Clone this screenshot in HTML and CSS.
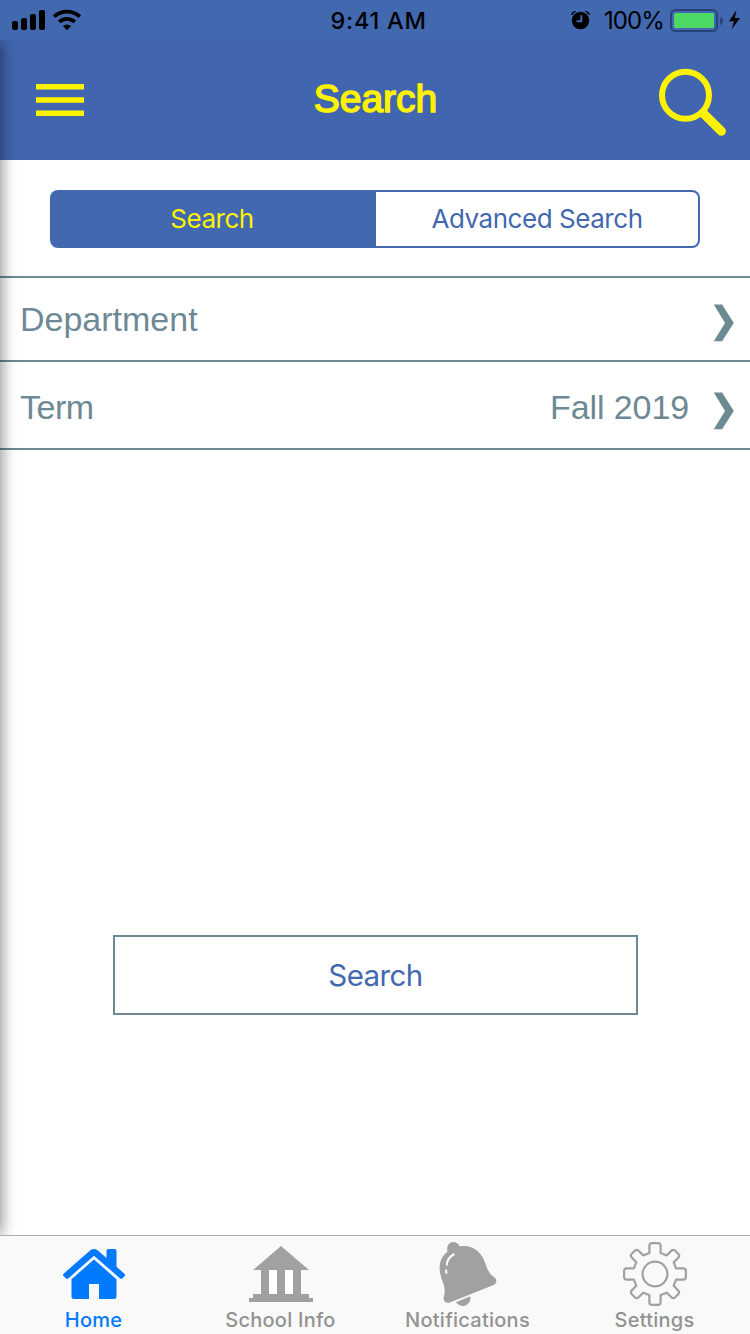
FILE: index.html
```html
<!DOCTYPE html>
<html lang="en">
<head>
<meta charset="utf-8">
<title>Search</title>
<link rel="stylesheet" href="styles.css">
</head>
<body>
<div class="app">
  <div class="status">
    <div class="status-side">
      <svg class="signal" width="70" height="22" viewBox="0 0 70 22">
        <rect x="0" y="12" width="6" height="9" rx="2"/>
        <rect x="9" y="9" width="6" height="12" rx="2"/>
        <rect x="18" y="5" width="6" height="16" rx="2"/>
        <rect x="27" y="1" width="6" height="20" rx="2"/>
        <g fill="none" stroke="#000" stroke-width="3.8">
          <path d="M42.2 7.6a18.8 18.8 0 0 1 25.6 0"/>
          <path d="M47.2 12.9a11.4 11.4 0 0 1 15.6 0"/>
        </g>
        <path d="M50.9 17.1a6.2 6.2 0 0 1 8.2 0L55 21.2z"/>
      </svg>
    </div>
    <div class="status-time">9:41 AM</div>
    <div class="status-side status-right">
      <svg class="alarm" width="20" height="20" viewBox="0 0 20 20">
        <circle cx="9.5" cy="10.5" r="8.7"/>
        <path d="M0 4.6Q1 1.2 5 1L5.2 1.6Q2.6 2.8 1 5zM19 4.6Q18 1.2 14 1l-.2.6Q16.4 2.8 18 5z"/>
        <path class="alarm-hands" d="M10.3 5.2v6H5.5"/>
      </svg>
      <span class="percent">100%</span>
      <svg class="battery" width="71" height="24" viewBox="0 0 71 24">
        <rect x="1" y="1" width="46" height="21" rx="4.5" fill="none" stroke="#28427a" stroke-width="2"/>
        <rect x="4" y="4" width="40" height="15" rx="1.5" fill="#4cd964"/>
        <path d="M50 8q3 1 3 4t-3 4z" fill="#28427a"/>
        <path d="M66.5 1L59 12.2h5L61.7 20.2 70 9h-5.2z"/>
      </svg>
    </div>
  </div>

  <div class="content">
    <header class="navbar">
      <svg class="nav-menu" width="48" height="32" viewBox="0 0 48 32">
        <path d="M0 0h48v5.5H0zM0 13.3h48v5.4H0zM0 26.5h48V32H0z"/>
      </svg>
      <h1 class="nav-title">Search</h1>
      <svg class="nav-search" width="68" height="68" viewBox="0 0 68 68">
        <circle cx="27.5" cy="27.3" r="23.5" stroke-width="6"/>
        <path d="M45 45L63.4 63.3" stroke-width="9" stroke-linecap="round"/>
      </svg>
    </header>

    <div class="segments">
      <div class="segment segment-active">Search</div>
      <div class="segment segment-outline">Advanced Search</div>
    </div>

    <div class="rows">
      <div class="row row-first">
        <span class="row-label">Department</span>
        <svg class="chevron" width="22" height="38" viewBox="0 0 22 38"><path d="M.8.5h8.3L20.8 19 9.1 37.2H.8L12 19z"/></svg>
      </div>
      <div class="row row-term">
        <span class="row-label">Term</span>
        <span class="row-value">Fall 2019</span>
        <svg class="chevron" width="22" height="38" viewBox="0 0 22 38"><path d="M.8.5h8.3L20.8 19 9.1 37.2H.8L12 19z"/></svg>
      </div>
    </div>

    <div class="submit">Search</div>
    <div class="edge-shadow"></div>
  </div>

  <nav class="tabs">
    <div class="tab tab-active">
      <svg width="64" height="64" viewBox="0 0 64 64">
        <path d="M1.7 34.2Q.4 32.8 1.9 31.4L28.4 8.2Q32 5.6 35.6 8.2L44.5 16V9.1Q44.5 7 46.6 7h6Q54.5 7 54.5 9.1V24.8L62.4 31.7Q63.8 33 62.6 34.3L60.8 36Q59.3 37.6 57.8 36.2L32 13.8 6.5 36.2Q5 37.6 3.6 36.1z"/>
        <path d="M32 17.6L54.5 37.2V54.5Q54.5 57 52 57H37V42H27V57H12Q9.5 57 9.5 54.5V37.2z"/>
      </svg>
      <span class="tab-label">Home</span>
    </div>
    <div class="tab">
      <svg width="64" height="64" viewBox="0 0 64 64" class="school">
        <path d="M32 4L60 28H52V52H60V56H64V60H0V56H4V52H12V28H4z"/>
        <path d="M20 28h8v24h-8zM36 28h8v24h-8z" fill="#fff"/>
      </svg>
      <span class="tab-label">School Info</span>
    </div>
    <div class="tab">
      <svg class="bell" width="64" height="64" viewBox="0 0 64 64">
        <path d="M12.4 9.8C11.3 3.8 14.2.1 18.3 0 21.4 0 23.6 1.8 24.6 4.3 36 2.4 45 8.3 49.2 18.5C52.5 27.2 53.3 31.2 59.5 35.5 62.2 37.3 62 41.6 58.5 43.1L15.5 60.2C11.4 61.8 8 59.6 8.7 55.4C10.9 48.7 9.3 43.8 6.5 36.4C3 26 4 16.4 12.4 9.8z"/>
        <path d="M20.8 60.2L34.9 54.4C36.4 58 33.7 62.7 29.7 63.7 26.1 64.7 23 62.6 20.8 60.2z"/>
        <path d="M19.5 12Q12 15.5 11.7 23.5M11 27.6L11.5 31.6" fill="none" stroke="#fff" stroke-width="2"/>
      </svg>
      <span class="tab-label">Notifications</span>
    </div>
    <div class="tab">
      <svg width="64" height="64" viewBox="0 0 64 64">
        <g fill="none" stroke="#a1a1a1" stroke-width="2.2" stroke-linejoin="round">
          <circle cx="32" cy="32" r="12.4"/>
          <path d="M26.4 11V3.8Q26.4 1.1 29 1.1H35Q37.6 1.1 37.6 3.8V11L43.7 13.4 48.4 8.8Q50.3 6.9 52.2 8.8L55.4 12Q57.1 13.8 55.4 15.6L50.7 20.3 53.1 26.4H60.2Q62.9 26.4 62.9 29V35Q62.9 37.6 60.2 37.6H53.1L50.7 43.7 55.2 48.4Q57.1 50.3 55.2 52.2L52.2 55.3Q50.3 57.1 48.4 55.2L43.7 50.7 37.6 53.1V60.2Q37.6 62.9 35 62.9H29Q26.4 62.9 26.4 60.2V53.1L20.3 50.7 15.6 55.2Q13.7 57.1 11.8 55.2L8.8 52.2Q6.9 50.3 8.8 48.4L13.3 43.7 10.9 37.6H3.8Q1.1 37.6 1.1 35V29Q1.1 26.4 3.8 26.4H10.9L13.3 20.3 8.8 15.6Q6.9 13.7 8.8 11.8L11.8 8.8Q13.7 6.9 15.6 8.8L20.3 13.4z"/>
        </g>
      </svg>
      <span class="tab-label">Settings</span>
    </div>
  </nav>
</div>
</body>
</html>
```

FILE: styles.css
```css
* { box-sizing: border-box; }

body {
  margin: 0;
  background: #fff;
  font-family: Inter, "Noto Sans", sans-serif;
}

.app {
  display: flex;
  flex-direction: column;
  width: 750px;
  height: 1334px;
  overflow: hidden;
}

svg { display: block; flex: none; }

.status {
  display: flex;
  height: 40px;
  background: #4268b0;
  color: #000;
  font-size: 24px;
  line-height: 42px;
  white-space: nowrap;
}

.status-side {
  display: flex;
  flex: 1;
  align-items: flex-start;
  padding: 9px 0 0 12px;
}

.status-time {
  width: 100px;
  padding-left: 4px;
  font-weight: 500;
  font-size: 23.5px;
  letter-spacing: 0.75px;
}

.status-right { justify-content: flex-end; padding: 9px 9px 0 0; }
.alarm { margin: 1px 13px 0 0; }
.alarm-hands { fill: none; stroke: #4268b0; stroke-width: 2; }
.percent { margin: -9px 6px 0 0; letter-spacing: -0.9px; }

.content {
  position: relative;
  display: flex;
  flex: 1;
  flex-direction: column;
}

.navbar {
  display: flex;
  align-items: center;
  justify-content: space-between;
  height: 120px;
  padding: 0 24px 0 36px;
  background: #4166af;
}

.nav-menu { fill: #fff200; margin-right: 9px; }
.nav-search { fill: none; stroke: #fff200; margin-top: 4px; }

.nav-title {
  margin: 0 0 3px;
  color: #fff200;
  font: 400 39px/48px "Liberation Sans", Arial, sans-serif;
  -webkit-text-stroke: 1.5px #fff200;
}

.segments {
  display: flex;
  height: 58px;
  margin: 30px 50px 28px;
}

.segment {
  flex: 1;
  color: #4268b0;
  font-size: 26px;
  line-height: 58px;
  letter-spacing: -0.45px;
  text-align: center;
}

.segment-active {
  flex: 0 0 326px;
  border-radius: 8px 0 0 8px;
  background: #4268b0;
  color: #fff200;
  padding-right: 2px;
}

.segment-outline {
  border: 2px solid #4268b0;
  border-left: 0;
  border-radius: 0 8px 8px 0;
  line-height: 54px;
}

.rows {
  color: #6d8994;
  font: 34px/40px "Liberation Sans", Arial, sans-serif;
}

.row {
  display: flex;
  align-items: center;
  height: 88px;
  padding: 0 15px 0 20px;
  border-bottom: 2px solid #6d8994;
}

.row-first { height: 86px; border-top: 2px solid #6d8994; }
.row-term { padding-top: 4px; }
.row-label { flex: 1; }
.row-term .row-label { letter-spacing: -0.5px; }
.row-value { margin-right: 24px; letter-spacing: -0.1px; }
.chevron { fill: #6d8994; margin-top: 8px; }

.submit {
  width: 525px;
  height: 80px;
  margin: 485px 0 0 113px;
  border: 2px solid #6d8994;
  color: #4268b0;
  font-size: 29.5px;
  line-height: 77px;
  letter-spacing: -0.6px;
  text-align: center;
}

.edge-shadow {
  position: absolute;
  top: 0;
  bottom: 0;
  left: 0;
  width: 18px;
  background: linear-gradient(to right, rgba(0,0,0,.27), rgba(0,0,0,.16) 25%, rgba(0,0,0,.07) 50%, rgba(0,0,0,.02) 75%, transparent);
  -webkit-mask-image: linear-gradient(rgba(0,0,0,.4), #000 12px, #000 calc(100% - 14px), rgba(0,0,0,.5));
  mask-image: linear-gradient(rgba(0,0,0,.4), #000 12px, #000 calc(100% - 14px), rgba(0,0,0,.5));
}

.tabs {
  display: flex;
  height: 99px;
  padding-right: 2px;
  border-top: 1px solid #adadad;
  background: #f9f9f9;
}

.tab {
  display: flex;
  flex: 1;
  flex-direction: column;
  align-items: center;
  padding-top: 6px;
  fill: #a1a1a1;
  color: #929292;
}

.tab-active { fill: #007aff; color: #007aff; }
.school { margin-left: 1px; }
.bell { margin-left: -2px; }

.tab-label {
  font-size: 20px;
  font-weight: 500;
  line-height: 28px;
  letter-spacing: 0.25px;
  white-space: nowrap;
}
```
